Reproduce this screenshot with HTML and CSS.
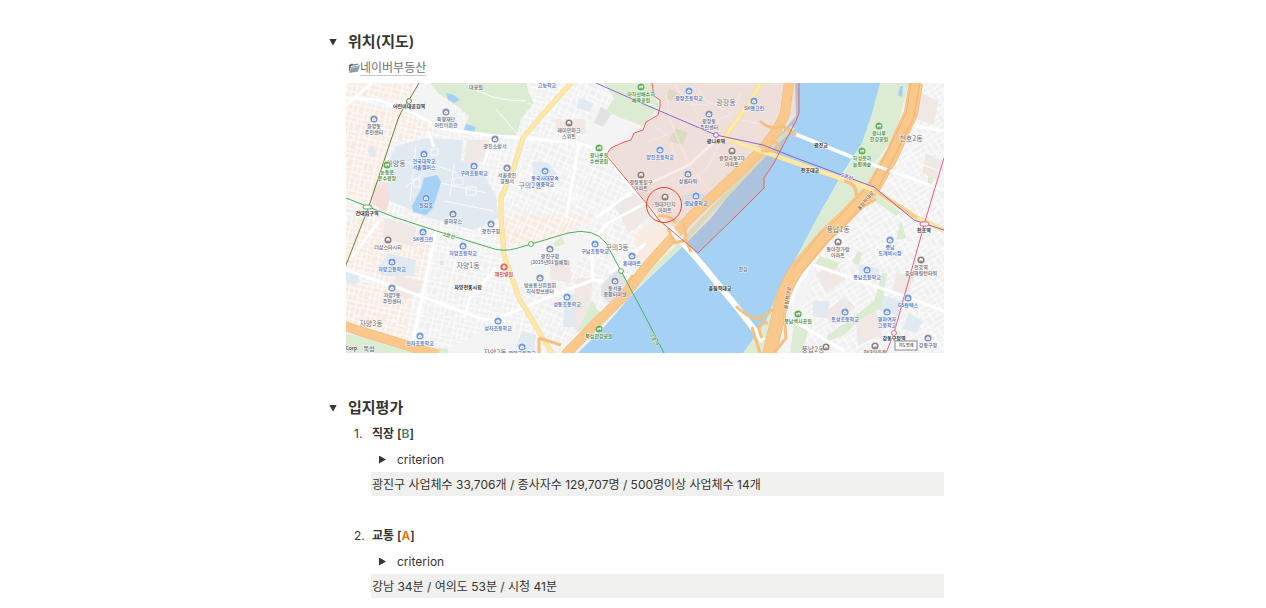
FILE: index.html
```html
<!DOCTYPE html>
<html lang="ko">
<head>
  <meta charset="UTF-8">
  <meta name="viewport" content="width=device-width, initial-scale=1.0">
  <title>위치 / 입지평가</title>
  <link rel="stylesheet" href="styles.css">
</head>
<body>

  <main class="page">

    <!-- Location -->
    <details class="section" open>
      <summary class="section-title"><h2>위치(지도)</h2></summary>
      <div class="section-body">
        <p class="link-row">
          <svg class="folder" viewBox="0 0 12 12" aria-hidden="true">
            <path d="M1 3 L4 1.500 L5.500 2.500 L10 1.500 L10.500 4 L3 6 L1 10 Z" fill="#60717e"/>
            <path d="M3 4 L10 2.500 L10 5 L2 9 Z" fill="#e8edf0"/>
            <path d="M3.500 5 L12 3.500 L10 9.500 L1 11 Z" fill="#8b9eac"/>
            <path d="M3.500 5 L12 3.500 L11.500 5 L3 7 Z" fill="#a9bac5"/>
          </svg><a href="#">네이버부동산</a>
        </p>

        <svg class="map" viewBox="0 0 598 270" role="img" aria-label="지도">
          <defs>
            <pattern id="streets-a" width="22" height="18" patternUnits="userSpaceOnUse" patternTransform="rotate(12)">
              <path d="M0 1 H22 M0 7 H12 M12 10 H22 M0 14 H22 M2 0 V18 M7 1 V14 M12 0 V18 M17 1 V10 M19 14 V18"/>
            </pattern>
            <pattern id="streets-b" width="26" height="20" patternUnits="userSpaceOnUse" patternTransform="rotate(-32)">
              <path d="M0 1 H26 M0 6 H15 M8 11 H26 M0 16 H26 M1 0 V20 M8 1 V16 M15 0 V11 M21 1 V20"/>
            </pattern>
            <pattern id="streets-c" width="20" height="24" patternUnits="userSpaceOnUse" patternTransform="rotate(24)">
              <path d="M0 1 H20 M0 8 H20 M6 13 H20 M0 19 H13 M1 0 V24 M6 1 V19 M13 0 V24 M17 8 V19"/>
            </pattern>
            <g id="pin">
              <circle r="4" fill="#fff" opacity=".7"/>
              <circle r="3.600" fill="currentColor"/>
              <path d="M-1.900 .1 L0 -1.800 L1.900 .1 V1.700 H-1.900 Z" fill="#fff"/>
              <path d="M-.6 .2 H.6 V1 H-.6 Z" fill="currentColor"/>
            </g>
            <g id="tree">
              <circle r="4" fill="#fff" opacity=".7"/>
              <circle r="3.600" fill="currentColor"/>
              <path d="M-1 -1.800 L.2 .6 H-.7 V1.800 H-1.300 V.6 H-2.200 Z M1.200 -1.400 A1 1 0 0 1 1.500 .6 V1.800 H.9 V.6 A1 1 0 0 1 1.200 -1.400 Z" fill="#fff"/>
            </g>
            <g id="ring">
              <circle r="4" fill="#fff" opacity=".7"/>
              <circle r="3.600" fill="currentColor"/>
              <circle r="1.900" fill="#fff"/>
              <path d="M-.8 2.200 V.6 H.8 V2.200 Z" fill="currentColor"/>
            </g>
            <g id="cross">
              <circle r="3.600" fill="currentColor"/>
              <path d="M-2 0 H2 M0 -2 V2" stroke="#fff" stroke-width="1.200"/>
            </g>
          </defs>

          <!-- Land -->
          <rect class="land" width="598" height="270"/>
          <path class="warm" d="M0 18 L60 30 L44 62 L24 120 L0 112 Z M60 30 L88 48 L50 60 Z M0 0 H68 L62 16 L0 12 Z M0 135 L48 138 L85 152 L76 207 L0 184 Z M0 193 L66 214 L60 256 L0 242 Z"/>
          <path class="warm" d="M154 132 H250 L225 148 L185 160 L156 166 Z M288 150 L322 130 L345 138 L300 182 L290 172 Z"/>
          <path class="streets-a" d="M0 0 H225 L155 120 V170 L205 270 H0 Z"/>
          <path class="streets-b" d="M568 0 H598 V270 H425 L450 188 L530 104 Z"/>
          <path class="streets-c" d="M225 0 H250 L305 25 L260 72 L300 122 L282 207 L223 268 L205 268 L156 170 V120 Z"/>
          <path class="plain" d="M76 2 L92 10 L132 51 L97 46 L64 28 Z M150 55 L178 60 M252 20 L268 28 L297 43 L260 66 L232 60 Z M160 170 L220 152 L245 160 L215 205 L180 212 Z M278 5 L285 0 M96 270 L152 240 L195 270 Z M424 270 L440 215 L475 170 L440 270 Z"/>
          <path class="block" d="M121 57 H144 L139 79 L117 82 Z M28 99 L43 99 L44 114 L39 127 L26 120 Z M39 135 L70 144 L68 164 L36 155 Z M50 193 L76 198 L75 208 L60 217 L46 211 Z M210 36 H239 L240 50 L220 52 L210 48 Z M204 173 L224 180 L225 200 L204 196 Z M231 195 H246 L245 240 L230 250 L224 230 Z M267 120 L290 112 L304 133 L283 150 Z M282 108 L300 100 L320 118 L303 130 Z M470 190 L490 182 L500 196 L480 210 Z M476 232 L498 214 L510 224 L490 242 Z M510 240 L530 226 L536 252 L512 262 Z M550 190 L568 194 L562 214 L546 210 Z M575 10 L592 18 L588 42 L570 36 Z M580 70 L596 78 L592 98 L576 90 Z"/>
          <path class="pink" d="M30 103 L42 99 L44 113 L40 130 L26 121 Z"/>
          <path class="terminal" d="M267 190 L275 186 L280 196 L283 205 L266 222 L255 213 V203 Z M255 24 L266 30 L257 44 L248 40 Z"/>
          <path class="campus" d="M50 63 L80 55 L117 57 L115 77 L137 90 L150 113 L152 135 L128 147 L80 134 L43 117 L40 83 Z"/>
          <path class="campus" d="M186 78 L203 80 L210 90 L206 100 L187 96 Z M42 170 L70 177 L68 193 L36 193 L34 182 Z M0 188 L14 190 L10 202 L0 199 Z M219 211 L230 212 V244 H217 Z M234 15 L247 20 L244 29 L230 25 Z M21 66 L27 62 L31 73 L24 74 Z M336 113 L350 108 L360 113 L352 125 L335 122 Z M467 218 L484 218 L480 235 L467 234 Z M536 212 L556 218 L552 233 L533 228 Z M513 181 L534 186 L531 196 L513 194 Z M563 230 L577 238 L570 250 L556 246 Z M176 248 L190 252 L188 268 L170 264 Z"/>
          <g class="campus-paths">
            <path d="M70 62 L64 118 M52 80 H82 L112 90 M95 100 L140 110 M60 104 L78 90 M98 118 L148 128 M108 82 L104 112"/>
            <path d="M68 96 H74 V104 H68 Z M108 95 H117 V102 H108 Z M85 66 H92 V72 H85 Z M120 104 H130 V112 H120 Z"/>
          </g>

          <!-- Parks -->
          <path class="park" d="M75 0 H180 L183 10 L188 20 L175 36 L171 52 L133 52 L117 47 L123 33 L110 22 L92 10 L84 0 Z"/>
          <path class="park" d="M258 0 H306 L308 13 L314 23 L297 43 L275 35 L260 28 L268 15 Z M330 45 L342 50 L336 62 L322 58 Z M323 5 L332 10 L326 18 L321 16 Z"/>
          <path class="park" d="M0 251 Q34 254 76 270 H0 Z M86 264 L102 266 V270 H86 Z M94 178 H98 V182 H94 Z M231 249 L246 218 L256 233 L244 246 Z M207 160 L216 154 L219 161 L210 164 Z"/>
          <path class="park" d="M534 0 H563 L545 67 L525 100 L491 135 L450 188 L433 222 L417 270 H390 L430 200 L471 135 L516 60 Z"/>
          <path class="park" d="M474 173 L494 180 L487 189 L468 183 Z M508 175 L512 168 L516 170 L513 182 L506 180 Z M555 137 L560 155 L550 157 L554 142 Z M536 190 L541 191 L535 225 L515 236 L498 252 L478 260 L482 252 L510 232 L528 218 Z M448 240 L462 248 L456 270 H444 Z M582 95 L587 94 L586 102 L581 102 Z M528 110 L555 129 L550 133 L525 115 Z"/>
          <path class="park-road" d="M150 26 L172 52 M120 0 Q140 18 180 18"/>

          <!-- Water -->
          <path class="water" d="M449 0 H534 L526 30 L516 60 L498 88 L471 135 L450 175 L433 205 L420 238 L397 270 H232 L260 242 L283 215 L300 198 L335 165 L365 135 L392 100 L425 62 L450 33 Z"/>
          <path class="water" d="M78 95 L91 92 L95 99 L87 125 L80 132 L67 129 L66 123 L75 106 Z M100 10 L108 12 L114 17 L108 20 L102 17 Z M120 41 L130 44 L128 49 L118 47 Z M554 4 L557 3 L556 14 L552 12 Z"/>
          <path class="bank" d="M447 44 L423 66 L397 94 L365 128 L334 162 L300 194 L282 211 L258 237 L232 262"/>

          <!-- Streets -->
          <g class="road">
            <path d="M0 15 L33 17 L63 28 L97 46 L150 53 L232 60 L257 68 L287 107 L322 143"/>
            <path d="M250 135 L287 108 L343 82 L367 60 L378 52"/>
            <path d="M0 187 L72 212 L133 235 L152 239"/>
            <path d="M90 148 L67 258 M146 54 L138 80 M233 60 L220 135"/>
            <path d="M155 234 L207 212 L247 197 L258 198 M247 197 L245 160 L262 140 L300 120"/>
            <path d="M468 182 L558 213 L598 228 M448 238 L498 268 M563 42 L598 48"/>
            <path d="M0 22 L26 0 M33 138 L5 175 M82 48 L88 64 M265 190 L300 160"/>
            <path d="M118 235 L124 215 L150 185 M475 165 L450 205 L445 220"/>
          </g>
          <g class="street">
            <path d="M300 20 L340 36 L370 52 M320 12 L325 40 L343 82 M343 82 L364 108 M300 110 L330 95 M340 8 L350 30 L363 40 L395 28"/>
            <path d="M305 40 L324 55 L330 80 M352 5 L360 18 L385 30 L395 10 M328 2 L345 22 L390 20 M374 60 L362 84 L342 100 M300 60 L320 52 M390 36 L420 42 L438 48"/>
            <path d="M182 20 L220 38 M235 0 L220 70 M160 60 V100 L220 108 M178 58 L168 100 M250 78 L225 120 M194 105 L240 118 M198 160 L202 205"/>
            <path d="M498 138 L540 155 L598 166 M510 160 L500 200 M540 150 L536 180 M545 60 L528 82 M560 75 L598 90 M568 60 L552 100 M538 96 L598 125"/>
          </g>

          <!-- District highlight -->
          <path class="district" d="M306 0 L308 13 L314 17 V23 L312 32 L300 39 L297 47 L288 50 L285 57 L278 59 L265 65 L260 72 L300 120 L313 137 L352 170 L388 135 L418 105 V95 L428 80 L450 38 L453 30 V0 Z"/>

          <!-- Highways -->
          <g class="highway-edge">
            <path d="M443 0 L439 30 Q434 46 413 70 L383 98 L345 134 L300 184 L277 214 L253 237 L219 272"/>
            <path class="wide" d="M570 0 L565 30 L546 72 L528 104 L498 135 L478 154 L450 187 Q436 208 432 235 L423 272"/>
            <path d="M-2 243 L92 272"/>
          </g>
          <g class="highway">
            <path d="M443 0 L439 30 Q434 46 413 70 L383 98 L345 134 L300 184 L277 214 L253 237 L219 272"/>
            <path class="wide" d="M570 0 L565 30 L546 72 L528 104 L498 135 L478 154 L450 187 Q436 208 432 235 L423 272"/>
            <path d="M-2 243 L92 272"/>
          </g>
          <path class="lane" d="M565 0 L560 30 L541 70 L523 102 L493 134 L473 152 L448 184 M574 0 L568 34 L532 106 L502 138 L482 158 L455 190"/>

          <!-- Main roads and bridges -->
          <path class="main-edge" d="M225 0 L198 30 L177 55 L167 87 L155 115 L155 135 L158 172 L173 215 L207 272 M415 0 L403 20 L378 55 L413 67 L450 80 L508 100 L528 107 L571 135 L598 147"/>
          <path class="main" d="M225 0 L198 30 L177 55 L167 87 L155 115 L155 135 L158 172 L173 215 L207 272 M415 0 L403 20 L378 55 L413 67 L450 80 L508 100 L528 107 L571 135 L598 147"/>
          <path class="bridge" d="M449 51 L506 74"/>
          <path class="road" d="M506 74 L528 82 L598 107"/>
          <path class="bridge olympic" d="M322 143 L353 178 L390 223 L417 258"/>
          <path class="highway thin" d="M528 107 L571 135"/>
          <g class="ramp">
            <path d="M414 38 Q424 48 437 43 L450 52 M424 58 Q438 60 429 68 L415 68 M322 145 L328 160 L340 157 L345 169 M338 140 L340 155 M312 133 Q324 131 330 140"/>
            <path d="M390 223 Q412 246 426 226 M406 244 L414 270 M416 255 Q408 238 422 240 M193 255 L215 262 M193 255 V270 M438 230 L440 255 L428 270"/>
            <path d="M498 98 Q512 101 510 113 M545 84 L536 94 M530 116 L515 125 M282 199 L287 192"/>
          </g>

          <!-- Subway lines -->
          <path class="line line-2" d="M0 115 L48 134 L100 151 L142 164 Q157 170 172 165 L222 150 Q248 144 260 160 L275 188 L300 235 L318 270"/>
          <path class="line line-7" d="M73 0 L63 17 Q54 28 49 45 L23 123 L0 182"/>
          <path class="line line-5" d="M250 0 L300 22 L370 52 L417 62 L450 75 L528 104 L568 137 L598 147"/>
          <path class="line line-8" d="M598 75 L580 135 L548 250 L540 270"/>

          <path class="border" d="M306 0 L308 13 L314 17 V23 L312 32 L300 39 L297 47 L288 50 L285 57 L278 59 L265 65 L260 72 L300 120 L313 137 L352 170 L388 135 L418 105 V95 L428 80 L450 38 L453 30 V0"/>

          <!-- Stations -->
          <g class="station">
            <circle class="line-7" cx="63" cy="18" r="2.400"/>
            <rect class="line-2" x="17" y="122" width="9" height="4" rx="2"/>
            <circle class="line-2" cx="185" cy="161" r="2.400"/>
            <circle class="line-2" cx="275" cy="188" r="2.400"/>
            <circle class="line-5" cx="370" cy="52" r="2.400"/>
            <rect class="line-8" x="574" y="139" width="9" height="4" rx="2"/>
            <circle class="line-8" cx="548" cy="250" r="2.400"/>
          </g>

          <!-- Neighbourhoods -->
          <g class="label dong">
            <text x="50" y="81">화양동</text>
            <text x="184" y="103">구의2동</text>
            <text x="380" y="20">광장동</text>
            <text x="565" y="56">천호2동</text>
            <text x="122" y="183">자양1동</text>
            <text x="25" y="241">자양3동</text>
            <text x="149" y="270">자양2동</text>
            <text x="271" y="165">구의3동</text>
            <text x="492" y="147">풍납1동</text>
            <text x="467" y="267">풍납2동</text>
          </g>

          <g class="label name">
            <text x="63" y="24">어린이대공원역</text>
            <text x="21" y="131">건대입구역</text>
            <text x="370" y="59">광나루역</text>
            <text x="578" y="148">천호역</text>
            <text x="548" y="256">강동구청역</text>
            <text x="122" y="205">자양전통시장</text>
            <text x="475" y="63">광진교</text>
            <text x="464" y="88">천호대교</text>
            <text x="374" y="206">올림픽대교</text>
          </g>

          <!-- Schools and shops -->
          <g class="label blue">
            <text x="201" y="3">고능학교</text>
            <g transform="translate(78 71)"><use href="#pin"/><text y="8">건국대학교</text><text y="14">서울캠퍼스</text></g>
            <g transform="translate(128 83)"><use href="#pin"/><text y="8">구의초등학교</text></g>
            <g transform="translate(80 115)"><use href="#pin"/><text y="8">일감호</text></g>
            <g transform="translate(199 88)"><use href="#pin"/><text y="8">동국사대부속</text><text y="14">여중학교</text></g>
            <g transform="translate(343 8)"><use href="#pin"/><text y="8">광장초등학교</text></g>
            <g transform="translate(408 18)"><use href="#pin"/><text y="8">SK엔크린</text></g>
            <g transform="translate(314 67)"><use href="#pin"/><text y="8">양진초등학교</text></g>
            <g transform="translate(350 113)"><use href="#pin"/><text y="8">광남중학교</text></g>
            <g transform="translate(77 149)"><use href="#pin"/><text y="8">SK엔크린</text></g>
            <g transform="translate(117 163)"><use href="#pin"/><text y="8">자양초등학교</text></g>
            <g transform="translate(46 179)"><use href="#pin"/><text y="8">자양고등학교</text></g>
            <g transform="translate(74 253)"><use href="#pin"/><text y="8">신자초등학교</text></g>
            <g transform="translate(152 238)"><use href="#pin"/><text y="8">성자초등학교</text></g>
            <g transform="translate(176 264)"><use href="#pin"/><text y="7">광양고등학교</text></g>
            <g transform="translate(221 214)"><use href="#pin"/><text y="8">성동초등학교</text></g>
            <g transform="translate(249 161)"><use href="#pin"/><text y="8">구남초등학교</text></g>
            <g transform="translate(286 173)"><use href="#pin"/><text y="8">롯데마트</text></g>
            <g transform="translate(544 157)"><use href="#pin"/><text y="8">풍납</text><text y="14">도깨비시장</text></g>
            <g transform="translate(521 187)"><use href="#pin"/><text y="8">풍납초등학교</text></g>
            <g transform="translate(562 215)"><use href="#pin"/><text y="8">GS칼텍스</text></g>
            <g transform="translate(541 229)"><use href="#pin"/><text y="8">영파여자</text><text y="14">고등학교</text></g>
            <g transform="translate(499 229)"><use href="#pin"/><text y="8">토성초등학교</text></g>
          </g>

          <!-- Offices -->
          <g class="label slate">
            <g transform="translate(28 36)"><use href="#pin"/><text y="8">화양동</text><text y="14">주민센터</text></g>
            <g transform="translate(100 29)"><use href="#pin"/><text y="8">육영재단</text><text y="14">어린이회관</text></g>
            <g transform="translate(149 56)"><use href="#pin"/><text y="8">광진소방서</text></g>
            <g transform="translate(107 131)"><use href="#pin"/><text y="8">쿨하우스</text></g>
            <g transform="translate(161 85)"><use href="#pin"/><text y="8">서울광진</text><text y="14">경찰서</text></g>
            <g transform="translate(363 31)"><use href="#pin"/><text y="8">광장동</text><text y="14">주민센터</text></g>
            <g transform="translate(342 91)"><use href="#pin"/><text y="8">상록타워</text></g>
            <g transform="translate(145 141)"><use href="#pin"/><text y="8">광진구청</text></g>
            <g transform="translate(46 205)"><use href="#pin"/><text y="8">자양3동</text><text y="14">주민센터</text></g>
            <g transform="translate(204 166)"><use href="#pin"/><text y="8">광진구청</text><text y="14">(2025년01월예정)</text></g>
            <g transform="translate(194 195)"><use href="#pin"/><text y="8">방송통신위원회</text><text y="14">지식정보센터</text></g>
            <g transform="translate(269 198)"><use href="#pin"/><text y="8">동서울</text><text y="14">종합터미널</text></g>
            <g transform="translate(582 255)"><use href="#pin"/><text y="8">강동구청</text></g>
            <text x="397" y="187">한강</text>
          </g>

          <!-- Apartments -->
          <g class="label brown">
            <text x="130" y="5">대공원</text>
            <g transform="translate(223 40)"><use href="#ring"/><text y="8">래미안파크</text><text y="14">스위트</text></g>
            <g transform="translate(295 92)"><use href="#ring"/><text y="8">광장동힐구</text><text y="14">아파트</text></g>
            <g transform="translate(386 68)"><use href="#ring"/><text y="8">광장극동2차</text><text y="14">아파트</text></g>
            <g transform="translate(319 114)"><use href="#ring"/><text y="8">현대3단지</text><text y="14">아파트</text></g>
            <g transform="translate(42 157)"><use href="#ring"/><text y="8">더샵스타시티</text></g>
            <g transform="translate(492 159)"><use href="#ring"/><text y="8">동아한가람</text><text y="14">아파트</text></g>
            <g transform="translate(575 177)"><use href="#ring"/><text y="8">천호역</text><text y="14">효성해링턴타워</text></g>
            <g transform="translate(480 264)"><use href="#ring"/></g>
            <g transform="translate(529 263)"><use href="#ring"/><text y="7">현대아파트</text></g>
          </g>

          <!-- Green spaces -->
          <g class="label green">
            <g transform="translate(41 82)"><use href="#tree"/><text y="8">능동로</text><text y="14">분수광장</text></g>
            <g transform="translate(253 65)"><use href="#tree"/><text y="8">광나룻길</text><text y="14">수변공원</text></g>
            <g transform="translate(295 4)"><use href="#tree"/><text y="8">아차산배수지</text><text y="14">체육공원</text></g>
            <g transform="translate(533 43)"><use href="#tree"/><text y="8">광나루</text><text y="14">한강공원</text></g>
            <g transform="translate(516 68)"><use href="#tree"/><text y="8">하성운과</text><text y="14">늘함께숲</text></g>
            <g transform="translate(253 246)"><use href="#tree"/><text y="8">뚝섬한강공원</text></g>
            <g transform="translate(452 231)"><use href="#tree"/><text y="8">풍납백사공원</text></g>
            <text transform="translate(103 153) rotate(16)">2호선</text>
            <text transform="translate(308 257) rotate(62)">2호선</text>
          </g>
          <g class="label red" transform="translate(158 184)"><use href="#cross"/><text y="8">혜민병원</text></g>
          <text class="label purple" transform="translate(501 94) rotate(20)">5호선</text>
          <g class="label highway-name">
            <text transform="translate(520 118) rotate(-50)">올림픽대로</text>
            <text transform="translate(442 215) rotate(-80)">올림픽대로</text>
          </g>

          <text class="label district-name" x="23" y="266">뚝섬</text>
          <text class="label corp" x="6" y="266">Corp.</text>
          <rect class="legend" x="549" y="258" width="22" height="9"/>
          <text class="label legend-text" x="560" y="263">지도범례</text>

          <circle class="target" cx="318" cy="122" r="17.500"/>
        </svg>
      </div>
    </details>

    <!-- Evaluation -->
    <details class="section" open>
      <summary class="section-title"><h2>입지평가</h2></summary>
      <ol class="score-list">
        <li>
          <p class="score">직장 [<span class="grade-b">B</span>]</p>
          <details class="criterion">
            <summary>criterion</summary>
          </details>
          <p class="note">광진구 사업체수 33,706개 / 종사자수 129,707명 / 500명이상 사업체수 14개</p>
        </li>
        <li>
          <p class="score">교통 [<span class="grade-a">A</span>]</p>
          <details class="criterion">
            <summary>criterion</summary>
          </details>
          <p class="note">강남 34분 / 여의도 53분 / 시청 41분</p>
        </li>
      </ol>
    </details>

  </main>

</body>
</html>
```
FILE: styles.css
```css
* {
  margin: 0;
  padding: 0;
  box-sizing: border-box;
}

body {
  font-family: Inter, "Noto Sans CJK KR", sans-serif;
  font-size: 12px;
  line-height: 24px;
  color: #37352f;
  background-color: white;
}

.page {
  max-width: 622px;
  margin: 0 auto;
  padding-top: 28px;
}

.section + .section {
  margin-top: 41px;
}

summary {
  display: flex;
  align-items: center;
  padding-top: 2px;
  list-style: none;
  cursor: pointer;
}

summary::-webkit-details-marker {
  display: none;
}

/* Toggle arrows */
summary::before {
  content: "";
  width: 8px;
  height: 7px;
  background-color: #37352f;
  clip-path: polygon(0 0, 100% 0, 50% 100%);
}

.section-title::before {
  margin: 0 11px 0 7px;
}

.section-title h2 {
  font-size: 15px;
  font-weight: 600;
}

.section-body {
  padding-left: 24px;
}

.link-row {
  display: flex;
  align-items: center;
  min-height: 26px;
  padding: 2px 0 0 2px;
  margin-bottom: 3px;
}

.link-row a {
  color: #73726e;
  line-height: 15px;
  text-decoration: none;
  border-bottom: 1px solid #c9c8c6;
}

.folder {
  width: 12px;
  height: 12px;
}

/* Score list */
.score-list {
  list-style: none;
  counter-reset: score;
}

.score-list li {
  padding-left: 49px;
  counter-increment: score;
}

.score-list li + li {
  margin-top: 26px;
}

.score {
  display: flex;
  padding: 2px 0 0 1px;
  font-weight: 600;
  white-space: pre;
}

.score::before {
  content: counter(score) ".";
  width: 18px;
  margin-left: -18px;
  font-weight: 400;
}

.grade-b {
  color: #448361;
}

.grade-a {
  color: #d9730d;
}

.criterion summary::before {
  width: 7px;
  height: 8px;
  margin: 0 11px 1px 8px;
  clip-path: polygon(0 0, 100% 50%, 0 100%);
}

.note {
  padding: 2px 0 0 1px;
  line-height: 22px;
  background-color: #f0f0ee;
}

/* Map */
.map {
  display: block;
  width: 100%;
  overflow: hidden;
}

.map path {
  stroke-linejoin: round;
}

.land {
  fill: #f1f1f2;
}

.warm {
  fill: #f8ebe2;
}

.plain {
  fill: #f4f4f5;
}

.block {
  fill: #f0e8e4;
}

.pink {
  fill: #f8ded8;
}

.terminal {
  fill: #e2e2e4;
}

.campus {
  fill: #e1e9f1;
}

.park {
  fill: #dcecd2;
}

.water {
  fill: #a4d1f4;
}

pattern path {
  fill: none;
  stroke: #fdfdfd;
  stroke-width: 1;
}

.streets-a {
  fill: url(#streets-a);
}

.streets-b {
  fill: url(#streets-b);
}

.streets-c {
  fill: url(#streets-c);
}

.campus-paths,
.street,
.park-road {
  fill: none;
  stroke: #fafafa;
  stroke-width: 1;
}

.bank {
  fill: none;
  stroke: #dbe9cc;
  stroke-width: 5;
}

.road {
  fill: none;
  stroke: white;
  stroke-width: 3;
}

.district {
  fill: #e8603c;
  fill-opacity: 0.12;
}

.border {
  fill: none;
  stroke: #ee6153;
  stroke-width: 1;
}

.highway-edge {
  fill: none;
  stroke: #efb878;
  stroke-width: 10;
}

.highway {
  fill: none;
  stroke: #fac88b;
  stroke-width: 9;
}

.highway-edge .wide {
  stroke-width: 14;
}

.highway .wide {
  stroke-width: 13;
}

.highway.thin {
  stroke-width: 3;
}

.lane {
  fill: none;
  stroke: #efb573;
  stroke-width: 1;
}

.ramp {
  fill: none;
  stroke: #f6c080;
  stroke-width: 3;
}

.main-edge {
  fill: none;
  stroke: #f3d892;
  stroke-width: 5;
}

.main {
  fill: none;
  stroke: #fde8a8;
  stroke-width: 4;
}

.bridge {
  fill: none;
  stroke: white;
  stroke-width: 4;
}

.bridge.olympic {
  stroke-width: 6;
}

.line {
  fill: none;
  stroke-width: 1;
}

.line-2 {
  stroke: #4fae56;
}

.line-5 {
  stroke: #9163d1;
}

.line-7 {
  stroke: #747b42;
}

.line-8 {
  stroke: #ea5c8b;
}

.station {
  fill: white;
  stroke-width: 1;
}

.target {
  fill: none;
  stroke: #f03e2e;
  stroke-width: 1;
}

/* Map labels */
.label {
  font-family: "Noto Sans CJK KR", sans-serif;
  font-size: 5px;
  font-weight: 500;
  text-anchor: middle;
  dominant-baseline: middle;
  paint-order: stroke;
  stroke: rgba(255, 255, 255, 0.7);
  stroke-width: 1px;
}

.label use {
  stroke: none;
}

.name {
  fill: #333;
  font-weight: 700;
}

.dong {
  fill: #777;
  font-size: 7px;
  font-weight: 400;
}

.blue {
  fill: #4a6fc4;
  color: #6f98e6;
}

.slate {
  fill: #65708a;
  color: #8292b5;
}

.brown {
  fill: #796b66;
  color: #8c7c76;
}

.green {
  fill: #3d8b37;
  color: #5fae52;
}

.red {
  fill: #d0453e;
  color: #e2675f;
}

.purple {
  fill: #8656cc;
}

.highway-name {
  fill: #9a6231;
}

.district-name {
  fill: #5f7293;
  font-size: 6px;
}

.corp {
  fill: #333;
}

.legend {
  fill: white;
  stroke: #888;
  stroke-width: 1;
}

.legend-text {
  fill: #444;
  font-size: 4px;
}
```
